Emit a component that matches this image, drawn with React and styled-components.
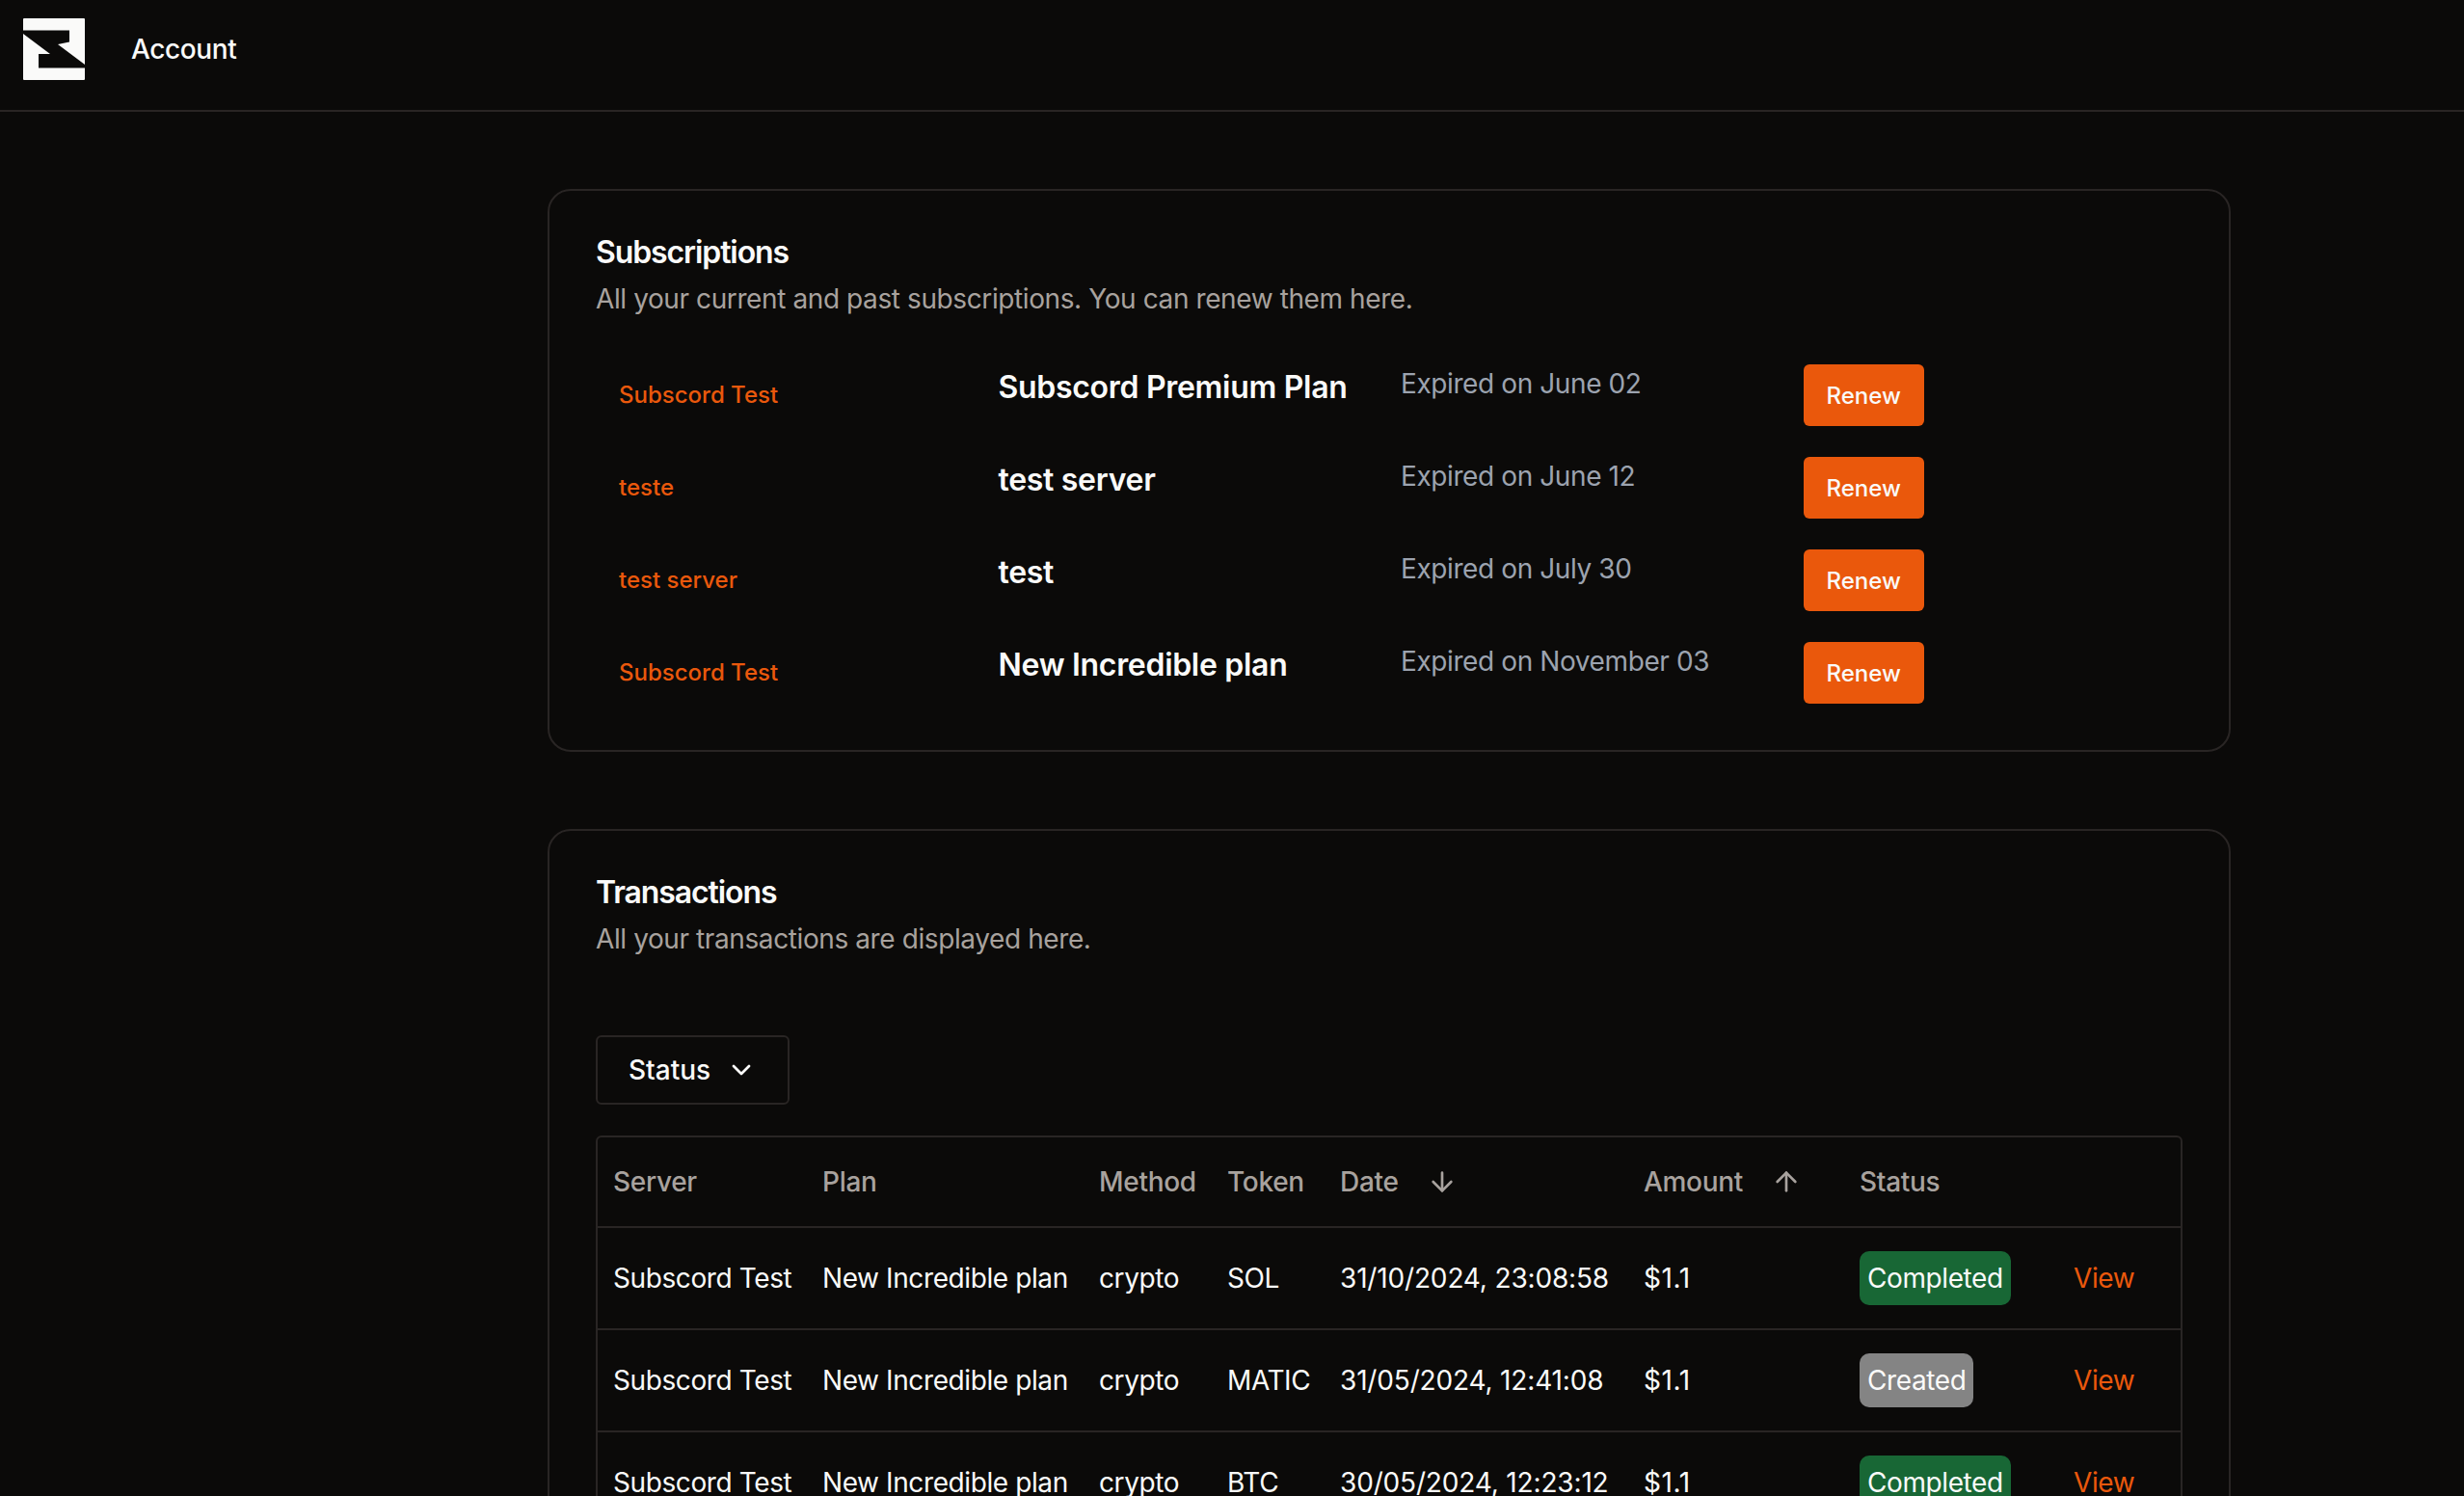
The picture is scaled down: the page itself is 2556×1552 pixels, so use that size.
import styled, { createGlobalStyle } from 'styled-components';
import { ArrowDown, ArrowUp, ChevronDown } from 'lucide-react';

const subscriptions = [
  { server: 'Subscord Test', plan: 'Subscord Premium Plan', expired: 'Expired on June 02' },
  { server: 'teste', plan: 'test server', expired: 'Expired on June 12' },
  { server: 'test server', plan: 'test', expired: 'Expired on July 30' },
  { server: 'Subscord Test', plan: 'New Incredible plan', expired: 'Expired on November 03' },
];

const transactions = [
  { token: 'SOL', date: '31/10/2024, 23:08:58', status: 'Completed' },
  { token: 'MATIC', date: '31/05/2024, 12:41:08', status: 'Created' },
  { token: 'BTC', date: '30/05/2024, 12:23:12', status: 'Completed' },
];

const columnWidths = [217, 287, 133, 117, 315, 224, 222, 127];

export default function App() {
  return (
    <>
      <GlobalStyle />
      <Header>
        <Logo viewBox="0 0 64 64">
          <path
            fillRule="evenodd"
            fill="#fafaf9"
            d="M1 0H63a1 1 0 0 1 1 1V63a1 1 0 0 1-1 1H1a1 1 0 0 1-1-1V1a1 1 0 0 1 1-1ZM0 12.500V16L28 37H16V51.500H64V48L36 27L48 24.500V12.500Z"
          />
        </Logo>
        <NavLink>Account</NavLink>
      </Header>
      <Main>
        <Card>
          <CardTitle>Subscriptions</CardTitle>
          <CardText>All your current and past subscriptions. You can renew them here.</CardText>
          <SubscriptionGrid>
            {subscriptions.map((item, i) => (
              <SubscriptionRow key={i}>
                <ServerLink>{item.server}</ServerLink>
                <PlanName>{item.plan}</PlanName>
                <Expiry>{item.expired}</Expiry>
                <RenewButton>Renew</RenewButton>
              </SubscriptionRow>
            ))}
          </SubscriptionGrid>
        </Card>
        <Card>
          <CardTitle>Transactions</CardTitle>
          <CardText>All your transactions are displayed here.</CardText>
          <Toolbar>
            <FilterButton>
              Status
              <ChevronDown size={32} strokeWidth={2} />
            </FilterButton>
          </Toolbar>
          <TableWrap>
            <Table>
              <colgroup>
                {columnWidths.map((w, i) => (
                  <Column key={i} $width={w} />
                ))}
              </colgroup>
              <thead>
                <tr>
                  <Th>Server</Th>
                  <Th>Plan</Th>
                  <Th>Method</Th>
                  <Th>Token</Th>
                  <Th>
                    <SortLabel>
                      Date
                      <ArrowDown size={32} strokeWidth={2} />
                    </SortLabel>
                  </Th>
                  <Th>
                    <SortLabel>
                      Amount
                      <ArrowUp size={32} strokeWidth={2} />
                    </SortLabel>
                  </Th>
                  <Th>Status</Th>
                  <Th />
                </tr>
              </thead>
              <tbody>
                {transactions.map((row) => (
                  <tr key={row.token}>
                    <Td>Subscord Test</Td>
                    <Td>New Incredible plan</Td>
                    <Td>crypto</Td>
                    <Td>{row.token}</Td>
                    <DateCell>{row.date}</DateCell>
                    <AmountCell>$1.1</AmountCell>
                    <Td>
                      <StatusBadge $status={row.status}>{row.status}</StatusBadge>
                    </Td>
                    <Td>
                      <ViewLink>View</ViewLink>
                    </Td>
                  </tr>
                ))}
              </tbody>
            </Table>
          </TableWrap>
        </Card>
      </Main>
    </>
  );
}

const GlobalStyle = createGlobalStyle`
  * {
    box-sizing: border-box;
  }
  html,
  body {
    margin: 0;
    height: 1552px;
    overflow: hidden;
    background: #0b0a09;
  }
  body {
    color: #fafaf9;
    font-family: Inter, "Liberation Sans", sans-serif;
    font-size: 28px;
    line-height: 40px;
    letter-spacing: -0.4px;
  }
`;

const Header = styled.header`
  display: flex;
  align-items: center;
  gap: 48px;
  height: 116px;
  padding: 0 24px 12px;
  border-bottom: 2px solid #292524;
`;

const Logo = styled.svg`
  display: block;
  width: 64px;
  height: 64px;
`;

const NavLink = styled.span`
  font-weight: 500;
`;

const Main = styled.main`
  display: flex;
  flex-direction: column;
  gap: 80px;
  width: 1746px;
  margin-left: 568px;
  padding-top: 80px;
`;

const Card = styled.section`
  padding: 48px;
  border: 2px solid #292524;
  border-radius: 24px;
`;

const CardTitle = styled.h2`
  margin: 0 0 12px;
  font-size: 32px;
  line-height: 32px;
  font-weight: 600;
  letter-spacing: -1.1px;
`;

const CardText = styled.p`
  margin: 0;
  color: #a8a29e;
`;

const SubscriptionGrid = styled.div`
  display: flex;
  flex-direction: column;
  gap: 32px;
  margin-top: 48px;
`;

const SubscriptionRow = styled.div`
  display: grid;
  grid-template-columns: repeat(4, 1fr);
  column-gap: 24px;
`;

const ServerLink = styled.a`
  display: flex;
  align-items: center;
  height: 64px;
  padding: 0 24px;
  color: #ea580c;
  font-size: 24px;
  font-weight: 500;
  letter-spacing: 0;
`;

const PlanName = styled.div`
  font-size: 32px;
  line-height: 48px;
  font-weight: 600;
  letter-spacing: -0.3px;
`;

const Expiry = styled.div`
  color: #9ca3af;
`;

const RenewButton = styled.button`
  justify-self: start;
  height: 64px;
  padding: 0 24px;
  border: 0;
  border-radius: 6px;
  background: #ea580c;
  color: #fafaf9;
  font: 500 24px Inter, "Liberation Sans", sans-serif;
`;

const Toolbar = styled.div`
  display: flex;
  padding: 80px 0 32px;
`;

const FilterButton = styled.button`
  display: flex;
  align-items: center;
  gap: 16px;
  height: 72px;
  padding: 0 32px;
  border: 2px solid #292524;
  border-radius: 6px;
  background: transparent;
  color: #fafaf9;
  font: 500 28px Inter, "Liberation Sans", sans-serif;
`;

const TableWrap = styled.div`
  border: 2px solid #292524;
  border-radius: 6px;
`;

const Table = styled.table`
  width: 100%;
  table-layout: fixed;
  border-collapse: separate;
  border-spacing: 0;
`;

const Column = styled.col`
  width: ${(p) => p.$width}px;
`;

const Th = styled.th`
  padding: 26px 16px;
  border-bottom: 2px solid #292524;
  color: #a8a29e;
  font-weight: 500;
  text-align: left;
  white-space: nowrap;
  letter-spacing: -0.3px;
`;

const SortLabel = styled.span`
  display: flex;
  align-items: center;
  gap: 29px;
`;

const Td = styled.td`
  padding: 24px 16px;
  border-bottom: 2px solid #292524;
  white-space: nowrap;
`;

const DateCell = styled(Td)`
  letter-spacing: -0.16px;
`;

const AmountCell = styled(Td)`
  letter-spacing: 0.6px;
`;

const StatusBadge = styled.span`
  display: inline-block;
  height: 56px;
  padding: 8px;
  border-radius: 10px;
  background: ${(p) => (p.$status === 'Completed' ? '#186735' : '#848484')};
  color: #fafaf9;
  vertical-align: top;
`;

const ViewLink = styled.a`
  color: #ea580c;
`;
